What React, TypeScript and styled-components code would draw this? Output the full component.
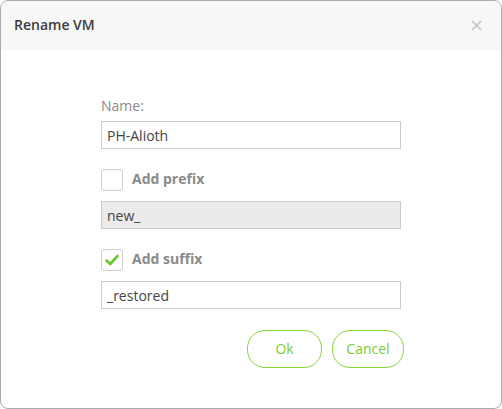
import styled, { createGlobalStyle } from "styled-components";

const GlobalStyle = createGlobalStyle`
  html, body {
    margin: 0;
    padding: 0;
    background: #ffffff;
  }
  * {
    box-sizing: border-box;
  }
`;

const Dialog = styled.div`
  width: 502px;
  height: 409px;
  border: 1px solid #ababab;
  border-radius: 8px;
  overflow: hidden;
  background: #ffffff;
  font-family: "Open Sans", "Noto Sans", sans-serif;
  display: flex;
  flex-direction: column;
`;

const Header = styled.div`
  height: 49px;
  flex-shrink: 0;
  background: #f7f7f7;
  display: flex;
  align-items: center;
  justify-content: space-between;
  padding: 0 17px 2px 13px;
  h2 {
    margin: 0;
    font-size: 14px;
    font-weight: 600;
    color: #3c3c3c;
  }
`;

const Close = styled.button`
  border: none;
  background: none;
  padding: 0;
  color: #c8c8c8;
  font-size: 18px;
  line-height: 1;
  cursor: pointer;
  font-family: "DejaVu Sans", sans-serif;
  display: flex;
  align-items: center;
`;

const Body = styled.div`
  width: 300px;
  margin: 0 auto;
  padding-top: 46px;
  display: flex;
  flex-direction: column;
`;

const Label = styled.label`
  font-size: 14px;
  line-height: 20px;
  color: #8a8a8a;
  margin-bottom: 5px;
`;

const Input = styled.input<{ $disabled?: boolean }>`
  width: 300px;
  height: 28px;
  border: 1px solid #cccccc;
  background: ${(p) => (p.$disabled ? "#ebebeb" : "#ffffff")};
  padding: 0 5px;
  font-family: inherit;
  font-size: 14px;
  color: #444444;
  outline: none;
`;

const CheckRow = styled.label`
  display: flex;
  align-items: center;
  gap: 9px;
  height: 22px;
  margin: 20px 0 10px;
  font-size: 14px;
  line-height: 20px;
  font-weight: 700;
  color: #8a8a8a;
  cursor: pointer;
  span + * {
    margin-top: -2px;
  }
`;

const Box = styled.span`
  width: 22px;
  height: 22px;
  border: 1px solid #cfcfcf;
  border-radius: 3px;
  display: flex;
  align-items: center;
  justify-content: center;
  background: #ffffff;
`;

const Buttons = styled.div`
  display: flex;
  justify-content: flex-end;
  gap: 10px;
  margin: 21px -3px 0 0;
`;

const Button = styled.button<{ $w: number }>`
  width: ${(p) => p.$w}px;
  height: 38px;
  padding: 0 0 2px;
  border: 1.5px solid #84d63a;
  border-radius: 18px;
  background: #ffffff;
  color: #7ccd32;
  font-family: inherit;
  font-size: 14px;
  cursor: pointer;
`;

function Check() {
  return (
    <svg width="14" height="12" viewBox="0 0 14 12">
      <path
        d="M1.5 6.5 L5.2 10 L12.5 2"
        fill="none"
        stroke="#6cc52a"
        strokeWidth="2.6"
        strokeLinecap="round"
        strokeLinejoin="round"
      />
    </svg>
  );
}

export default function App() {
  return (
    <>
      <GlobalStyle />
      <Dialog>
        <Header>
          <h2>Rename VM</h2>
          <Close aria-label="Close">×</Close>
        </Header>
        <Body>
          <Label>Name:</Label>
          <Input defaultValue="PH-Alioth" />
          <CheckRow>
            <Box />
            <span>Add prefix</span>
          </CheckRow>
          <Input $disabled defaultValue="new_" readOnly />
          <CheckRow>
            <Box>
              <Check />
            </Box>
            <span>Add suffix</span>
          </CheckRow>
          <Input defaultValue="_restored" />
          <Buttons>
            <Button $w={75}>Ok</Button>
            <Button $w={72}>Cancel</Button>
          </Buttons>
        </Body>
      </Dialog>
    </>
  );
}
